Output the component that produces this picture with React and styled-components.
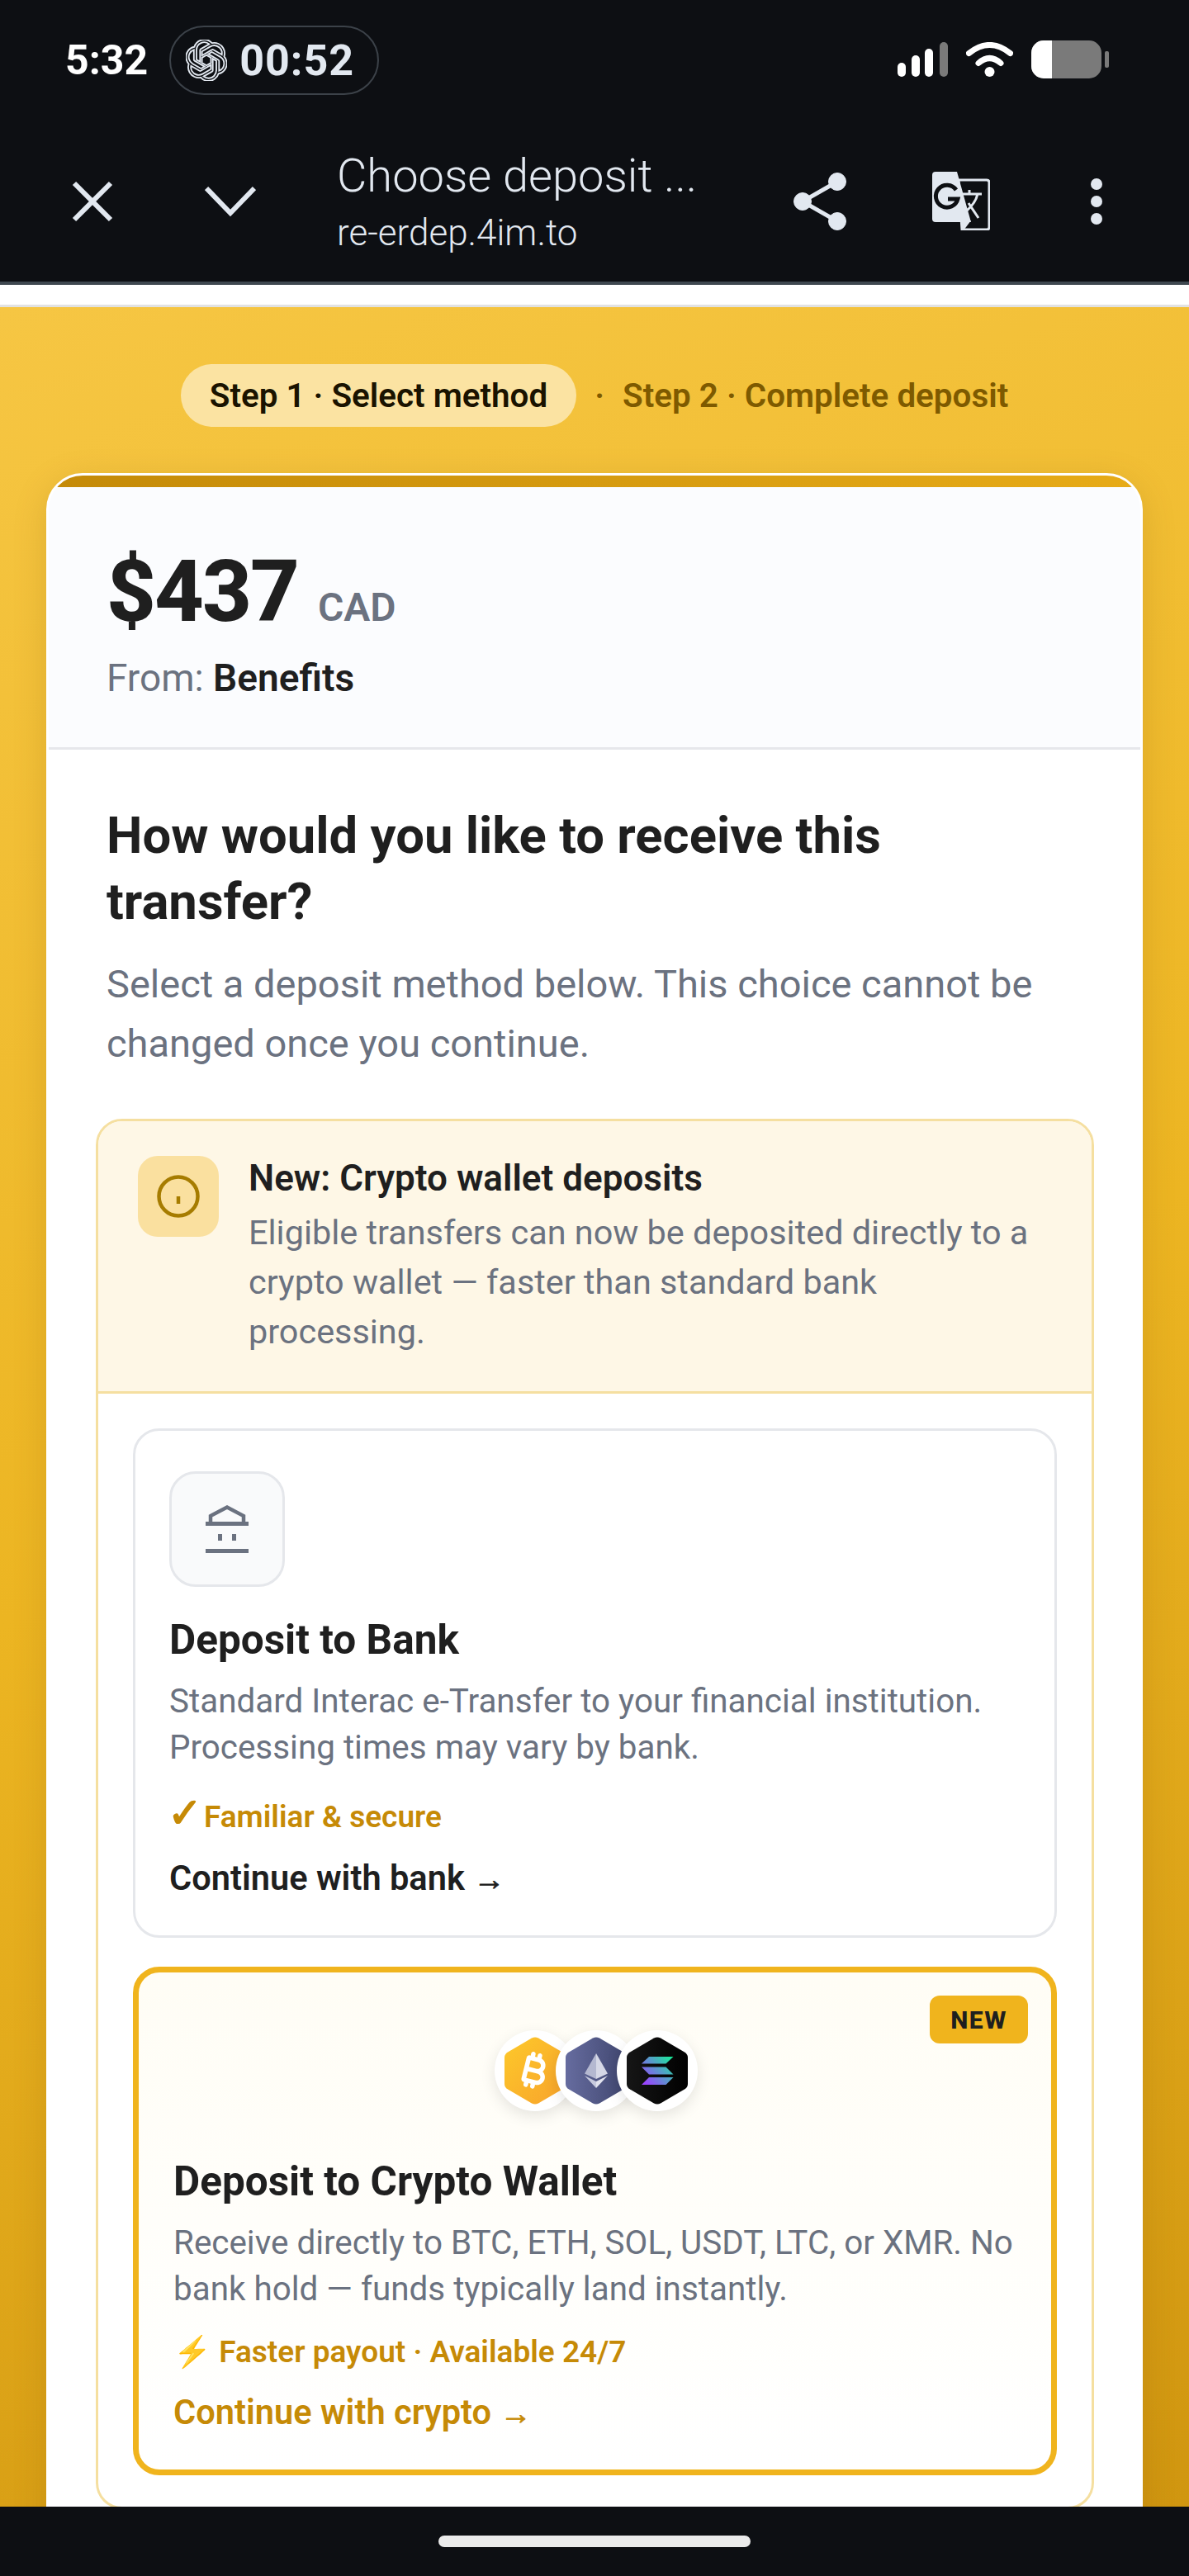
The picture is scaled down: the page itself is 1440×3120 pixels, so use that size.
import React from "react";
import styled, { createGlobalStyle } from "styled-components";
import { SiOpenai } from "react-icons/si";
import { FaBitcoinSign } from "react-icons/fa6";

const Global = createGlobalStyle`
  html, body { margin: 0; padding: 0; background: #0d0f13; overflow: hidden; }
  * { box-sizing: border-box; }
  body { font-family: Roboto, "Liberation Sans", sans-serif; }
`;

const Phone = styled.div`
  width: 1440px;
  height: 3120px;
  display: flex;
  flex-direction: column;
  overflow: hidden;
`;

const TopBars = styled.div`
  height: 341px;
  background: #0d0f13;
  display: flex;
  flex-direction: column;
  flex: none;
`;

const StatusBar = styled.div`
  height: 140px;
  padding: 31px 97px 0 79px;
  display: flex;
  align-items: flex-start;
  justify-content: space-between;
`;

const StatusLeft = styled.div`
  display: flex;
  align-items: center;
  gap: 26px;
  height: 84px;
`;

const Clock = styled.div`
  color: #fff;
  font-size: 50px;
  font-weight: 700;
`;

const RecordPill = styled.div`
  width: 254px;
  height: 84px;
  border: 2px solid #3c4249;
  border-radius: 42px;
  display: flex;
  align-items: center;
  gap: 15px;
  padding-left: 18px;
  color: #e2e8f0;
  font-size: 52px;
  font-weight: 700;
  letter-spacing: 1px;
`;

const StatusRight = styled.div`
  display: flex;
  align-items: center;
  gap: 22px;
  height: 46px;
  margin-top: 18px;
`;

const Toolbar = styled.div`
  flex: 1;
  display: flex;
  align-items: center;
  padding: 6px 0 0 87px;
`;

const ToolButton = styled.div`
  display: flex;
  margin-right: ${(p) => p.$gap}px;
`;

const UrlBlock = styled.div`
  width: 553px;
  display: flex;
  flex-direction: column;
  gap: 13px;
  color: #e2e8f0;
`;

const PageTitle = styled.div`
  font-size: 56px;
  line-height: 64px;
  font-weight: 300;
  white-space: nowrap;
`;

const PageUrl = styled.div`
  font-size: 44px;
  line-height: 48px;
  font-weight: 300;
`;

const Rule = styled.div`
  flex: none;
  height: ${(p) => p.$h}px;
  background: ${(p) => p.$bg};
`;

const Page = styled.main`
  flex: 1;
  min-height: 0;
  overflow: hidden;
  background: linear-gradient(160deg, #f6c643 0%, #ecb522 50%, #d09610 100%);
  padding: 69px 56px 0;
`;

const Steps = styled.div`
  display: flex;
  align-items: center;
  justify-content: center;
  gap: 22px;
  height: 76px;
  margin-bottom: 56px;
  font-size: 40.4px;
  font-weight: 600;
  color: #7e5a00;
`;

const StepPill = styled.div`
  height: 76px;
  padding: 0 35px;
  border-radius: 38px;
  background: #fbe3a2;
  color: #1a1300;
  display: flex;
  align-items: center;
`;

const Card = styled.section`
  background: #fff;
  border: 3px solid #fff;
  border-radius: 44px 44px 0 0;
  box-shadow: 0 10px 40px rgba(120, 80, 0, 0.18);
  min-height: 2500px;
  overflow: hidden;
`;

const CardStripe = styled.div`
  height: 14px;
  background: linear-gradient(90deg, #c48a08, #e7ab17);
`;

const Amount = styled.div`
  height: 318px;
  background: #fbfcfe;
  border-bottom: 3px solid #e6e7eb;
  padding: 66px 0 0 70px;
`;

const AmountRow = styled.div`
  display: flex;
  align-items: baseline;
  gap: 24px;
  color: #1f1f1f;
`;

const Price = styled.span`
  font-size: 104px;
  line-height: 122px;
  font-weight: 800;
  letter-spacing: -2px;
`;

const Currency = styled.span`
  font-size: 48px;
  font-weight: 600;
  color: #6b7280;
`;

const From = styled.div`
  font-size: 46px;
  line-height: 56px;
  margin-top: 15px;
  color: #6b7280;
  & b {
    color: #1f1f1f;
    font-weight: 600;
  }
`;

const Body = styled.div`
  padding: 64px 56px 0 57px;
`;

const Heading = styled.h1`
  margin: 0 0 0 13px;
  font-size: 61.6px;
  line-height: 80px;
  font-weight: 700;
  color: #1f1f1f;
  white-space: nowrap;
`;

const Lead = styled.p`
  margin: 24px 0 55px 13px;
  font-size: 47px;
  line-height: 72px;
  color: #6b7280;
  white-space: nowrap;
`;

const Methods = styled.div`
  border: 3px solid #f5dfa0;
  border-radius: 32px;
  min-height: 1684px;
`;

const Notice = styled.div`
  background: #fef7e6;
  border-bottom: 3px solid #f5dfa0;
  border-radius: 29px 29px 0 0;
  height: 330px;
  padding: 42px 48px;
  display: flex;
  gap: 36px;
`;

const NoticeIcon = styled.div`
  flex: none;
  width: 98px;
  height: 98px;
  border-radius: 24px;
  background: #fae09f;
  display: flex;
  align-items: center;
  justify-content: center;
`;

const NoticeTitle = styled.div`
  margin-top: -1px;
  font-size: 44px;
  line-height: 56px;
  font-weight: 600;
  color: #1f1f1f;
  white-space: nowrap;
`;

const NoticeText = styled.div`
  margin-top: 8px;
  font-size: 41.4px;
  line-height: 60px;
  color: #6b7280;
  white-space: nowrap;
`;

const CardList = styled.div`
  padding: 42px 42px 0;
  display: flex;
  flex-direction: column;
  gap: 35px;
`;

const Option = styled.div`
  position: relative;
  height: ${(p) => p.$h}px;
  border-radius: 32px;
  border: ${(p) => (p.$featured ? "7px solid #f0b41d" : "3px solid #e5e7eb")};
  background: ${(p) => (p.$featured ? "linear-gradient(180deg, #fffdf5, #fff)" : "#fff")};
  padding: ${(p) => (p.$featured ? "70px 40px 0 42px" : "49px 41px 0")};
`;

const BankIcon = styled.div`
  width: 140px;
  height: 140px;
  border-radius: 32px;
  border: 3px solid #e5e7eb;
  background: #f9fafb;
  display: flex;
  align-items: center;
  justify-content: center;
`;

const CoinRow = styled.div`
  display: flex;
  justify-content: center;
  height: 98px;
`;

const Coin = styled.div`
  width: 98px;
  height: 98px;
  border-radius: 50%;
  background: #fff;
  box-shadow: 0 6px 18px rgba(0, 0, 0, 0.1);
  display: flex;
  align-items: center;
  justify-content: center;
  margin-left: ${(p) => (p.$first ? 0 : -24)}px;
`;

const OptionTitle = styled.h2`
  margin: ${(p) => p.$top}px 0 0;
  font-size: 49.5px;
  line-height: 62px;
  font-weight: 700;
  color: #1f1f1f;
`;

const OptionText = styled.p`
  margin: 16px 0 0;
  font-size: 40.4px;
  line-height: 56px;
  color: #6b7280;
  white-space: nowrap;
`;

const Perk = styled.div`
  margin-top: ${(p) => p.$top}px;
  height: 50px;
  font-size: 37px;
  line-height: 50px;
  font-weight: 600;
  color: #c68a06;
  white-space: nowrap;
`;

const CheckMark = styled.span`
  display: inline-block;
  width: 42px;
  margin-left: -2px;
  margin-right: 2px;
  font-family: "DejaVu Sans", sans-serif;
  font-size: 50px;
  line-height: 40px;
  -webkit-text-stroke: 1.6px #c68a06;
`;

const Action = styled.div`
  margin-top: ${(p) => p.$top}px;
  font-size: 41.6px;
  line-height: 52px;
  font-weight: 600;
  color: ${(p) => p.$color};
`;

const ActionArrow = styled.span`
  font-family: "Liberation Sans", sans-serif;
  font-size: 38px;
  line-height: 40px;
  -webkit-text-stroke: 0.8px ${(p) => p.$color};
`;

const NewBadge = styled.div`
  position: absolute;
  top: 28px;
  right: 28px;
  width: 119px;
  height: 58px;
  border-radius: 12px;
  background: #f0b41d;
  color: #1f1f1f;
  font-size: 30px;
  font-weight: 800;
  letter-spacing: 1.5px;
  display: flex;
  align-items: center;
  justify-content: center;
`;

const BottomBar = styled.div`
  flex: none;
  height: 84px;
  background: #0d0f13;
  display: flex;
  justify-content: center;
  padding-top: 35px;
`;

const HomeLine = styled.div`
  width: 378px;
  height: 14px;
  border-radius: 7px;
  background: #ebebeb;
`;

const HEX = "M33 1.5 Q37 -0.5 41 1.5 L70 18.5 Q74 21 74 25 V57 Q74 61 70 63.5 L41 80.5 Q37 82.5 33 80.5 L4 63.5 Q0 61 0 57 V25 Q0 21 4 18.5 Z";

function Signal() {
  return (
    <svg width="61" height="42" viewBox="0 0 61 42">
      <rect x="0" y="25" width="10" height="17" rx="5" fill="#fff" />
      <rect x="17" y="16" width="10" height="26" rx="5" fill="#fff" />
      <rect x="33" y="8" width="10" height="34" rx="5" fill="#fff" />
      <rect x="51" y="0" width="10" height="42" rx="5" fill="#7a7a7a" />
    </svg>
  );
}

function Wifi() {
  return (
    <svg width="57" height="42" viewBox="0 0 57 42" fill="none" stroke="#fff" strokeWidth="7" strokeLinecap="round">
      <path d="M3.5 13.5 Q28.5 -6.5 53.5 13.5" />
      <path d="M15 25.5 Q28.5 13.5 42 25.5" />
      <circle cx="28.5" cy="36" r="6" fill="#fff" stroke="none" />
    </svg>
  );
}

function Battery() {
  return (
    <svg width="94" height="46" viewBox="0 0 94 46">
      <rect x="0" y="0" width="85" height="46" rx="15" fill="#7a7a7a" />
      <path d="M25 0 H15 A15 15 0 0 0 0 15 V31 A15 15 0 0 0 15 46 H25 Z" fill="#fff" />
      <rect x="89" y="13" width="5" height="20" rx="2" fill="#7a7a7a" />
    </svg>
  );
}

function CloseIcon() {
  return (
    <svg width="50" height="50" viewBox="0 0 50 50" stroke="#e2e8f0" strokeWidth="6">
      <path d="M3 3 L47 47 M47 3 L3 47" />
    </svg>
  );
}

function ChevronIcon() {
  return (
    <svg width="62" height="38" viewBox="0 0 62 38" fill="none" stroke="#e2e8f0" strokeWidth="6">
      <path d="M2 3 L31 33 L60 3" />
    </svg>
  );
}

function ShareIcon() {
  return (
    <svg width="64" height="70" viewBox="0 0 64 70" fill="#e2e8f0" stroke="#e2e8f0">
      <circle cx="53" cy="11" r="10.5" />
      <circle cx="11" cy="35" r="10.5" />
      <circle cx="53" cy="59" r="10.5" />
      <path d="M53 11 L11 35 L53 59" fill="none" strokeWidth="5" />
    </svg>
  );
}

function TranslateIcon() {
  return (
    <svg width="70" height="71" viewBox="0 0 70 71">
      <path d="M32 10 H66 Q69 10 69 13 V67 Q69 70 66 70 H36 Z" fill="none" stroke="#e2e8f0" strokeWidth="3" />
      <path d="M4 0 H30 L47 61 H4 Q0 61 0 57 V4 Q0 0 4 0 Z" fill="#e2e8f0" />
      <path d="M34 60 L38 71 L47 59 Z" fill="#e2e8f0" />
      <path d="M29 22 A13.5 13.5 0 1 0 31 33 H19" fill="none" stroke="#0d0f13" strokeWidth="5" />
      <path d="M37 27 H60 M45 22 V27 M55 27 Q52 40 38 50 M44 38 L56 56" fill="none" stroke="#e2e8f0" strokeWidth="3" />
    </svg>
  );
}

function MoreIcon() {
  return (
    <svg width="14" height="56" viewBox="0 0 14 56" fill="#e2e8f0">
      <circle cx="7" cy="7" r="7" />
      <circle cx="7" cy="28" r="7" />
      <circle cx="7" cy="49" r="7" />
    </svg>
  );
}

function InfoIcon() {
  return (
    <svg width="52" height="52" viewBox="0 0 52 52" fill="none" stroke="#a67c00" strokeWidth="4.5">
      <circle cx="26" cy="26" r="23.5" />
      <path d="M26 26 V35" />
    </svg>
  );
}

function BankGlyph() {
  return (
    <svg width="52" height="58" viewBox="0 0 52 58" fill="none" stroke="#6b7280" strokeWidth="4.5">
      <path d="M6 23 V13 L26 2.5 L46 13 V23" />
      <path d="M0 22.5 H52 M0 55.5 H52" strokeWidth="5" />
      <path d="M17.5 35 V43 M34.5 35 V43" strokeWidth="5" />
    </svg>
  );
}

function BitcoinCoin() {
  return (
    <svg width="74" height="82" viewBox="0 0 74 82">
      <defs>
        <linearGradient id="btc" x1="0" y1="0" x2="1" y2="1">
          <stop offset="0" stopColor="#fdc92a" />
          <stop offset="1" stopColor="#f8a32c" />
        </linearGradient>
      </defs>
      <path d={HEX} fill="url(#btc)" />
      <g transform="rotate(14 37 41)">
        <FaBitcoinSign x={15} y={19} size={44} color="#fff" />
      </g>
    </svg>
  );
}

function EthCoin() {
  return (
    <svg width="74" height="82" viewBox="0 0 74 82">
      <defs>
        <linearGradient id="eth" x1="0" y1="0" x2="1" y2="0">
          <stop offset="0" stopColor="#666c9f" />
          <stop offset="1" stopColor="#40466f" />
        </linearGradient>
      </defs>
      <path d={HEX} fill="url(#eth)" />
      <path d="M37 20 L23 44.5 L37 51 Z" fill="#b4b8d0" />
      <path d="M37 20 L51 44.5 L37 51 Z" fill="#d6d8e6" />
      <path d="M23 47 L37 62 V54 Z" fill="#c7cade" />
      <path d="M51 47 L37 62 V54 Z" fill="#e2e3ee" />
    </svg>
  );
}

function SolCoin() {
  return (
    <svg width="74" height="82" viewBox="0 0 74 82">
      <defs>
        <linearGradient id="solBg" x1="0" y1="0" x2="1" y2="0">
          <stop offset="0" stopColor="#161616" />
          <stop offset="1" stopColor="#000" />
        </linearGradient>
        <linearGradient id="sol" gradientUnits="userSpaceOnUse" x1="18" y1="58" x2="56" y2="24">
          <stop offset="0.1" stopColor="#9945ff" />
          <stop offset="1" stopColor="#14f195" />
        </linearGradient>
      </defs>
      <path d={HEX} fill="url(#solBg)" />
      <path d="M27 24 H56.5 L47.5 32.5 H18 Z" fill="url(#sol)" />
      <path d="M18 36.5 H47.5 L56.5 45.5 H27 Z" fill="url(#sol)" />
      <path d="M27 49 H56.5 L47.5 58 H18 Z" fill="url(#sol)" />
    </svg>
  );
}

export default function App() {
  return (
    <>
      <Global />
      <Phone>
        <TopBars>
          <StatusBar>
            <StatusLeft>
              <Clock>5:32</Clock>
              <RecordPill>
                <SiOpenai size={50} fill="none" strokeWidth={0.9} />
                00:52
              </RecordPill>
            </StatusLeft>
            <StatusRight>
              <Signal />
              <Wifi />
              <Battery />
            </StatusRight>
          </StatusBar>
          <Toolbar>
            <ToolButton $gap={111}><CloseIcon /></ToolButton>
            <ToolButton $gap={98}><ChevronIcon /></ToolButton>
            <UrlBlock>
              <PageTitle>Choose deposit ...</PageTitle>
              <PageUrl>re-erdep.4im.to</PageUrl>
            </UrlBlock>
            <ToolButton $gap={104}><ShareIcon /></ToolButton>
            <ToolButton $gap={122}><TranslateIcon /></ToolButton>
            <ToolButton $gap={0}><MoreIcon /></ToolButton>
          </Toolbar>
        </TopBars>
        <Rule $h={4} $bg="#3f4850" />
        <Rule $h={24} $bg="#fff" />
        <Rule $h={3} $bg="#e2e2e2" />
        <Page>
          <Steps>
            <StepPill>Step 1 · Select method</StepPill>
            <span>·</span>
            <span>Step 2 · Complete deposit</span>
          </Steps>
          <Card>
            <CardStripe />
            <Amount>
              <AmountRow>
                <Price>$437</Price>
                <Currency>CAD</Currency>
              </AmountRow>
              <From>
                From: <b>Benefits</b>
              </From>
            </Amount>
            <Body>
              <Heading>
                How would you like to receive this
                <br />
                transfer?
              </Heading>
              <Lead>
                Select a deposit method below. This choice cannot be
                <br />
                changed once you continue.
              </Lead>
              <Methods>
                <Notice>
                  <NoticeIcon>
                    <InfoIcon />
                  </NoticeIcon>
                  <div>
                    <NoticeTitle>New: Crypto wallet deposits</NoticeTitle>
                    <NoticeText>
                      Eligible transfers can now be deposited directly to a
                      <br />
                      crypto wallet — faster than standard bank
                      <br />
                      processing.
                    </NoticeText>
                  </div>
                </Notice>
                <CardList>
                  <Option $h={617}>
                    <BankIcon>
                      <BankGlyph />
                    </BankIcon>
                    <OptionTitle $top={33}>Deposit to Bank</OptionTitle>
                    <OptionText>
                      Standard Interac e-Transfer to your financial institution.
                      <br />
                      Processing times may vary by bank.
                    </OptionText>
                    <Perk $top={31}>
                      <CheckMark>✓</CheckMark>Familiar &amp; secure
                    </Perk>
                    <Action $top={23} $color="#1f1f1f">
                      Continue with bank <ActionArrow $color="#1f1f1f">→</ActionArrow>
                    </Action>
                  </Option>
                  <Option $h={616} $featured>
                    <NewBadge>NEW</NewBadge>
                    <CoinRow>
                      <Coin $first><BitcoinCoin /></Coin>
                      <Coin><EthCoin /></Coin>
                      <Coin><SolCoin /></Coin>
                    </CoinRow>
                    <OptionTitle $top={54}>Deposit to Crypto Wallet</OptionTitle>
                    <OptionText>
                      Receive directly to BTC, ETH, SOL, USDT, LTC, or XMR. No
                      <br />
                      bank hold — funds typically land instantly.
                    </OptionText>
                    <Perk $top={23}>⚡ Faster payout · Available 24/7</Perk>
                    <Action $top={22} $color="#c68a06">
                      Continue with crypto <ActionArrow $color="#c68a06">→</ActionArrow>
                    </Action>
                  </Option>
                </CardList>
              </Methods>
            </Body>
          </Card>
        </Page>
        <BottomBar>
          <HomeLine />
        </BottomBar>
      </Phone>
    </>
  );
}
